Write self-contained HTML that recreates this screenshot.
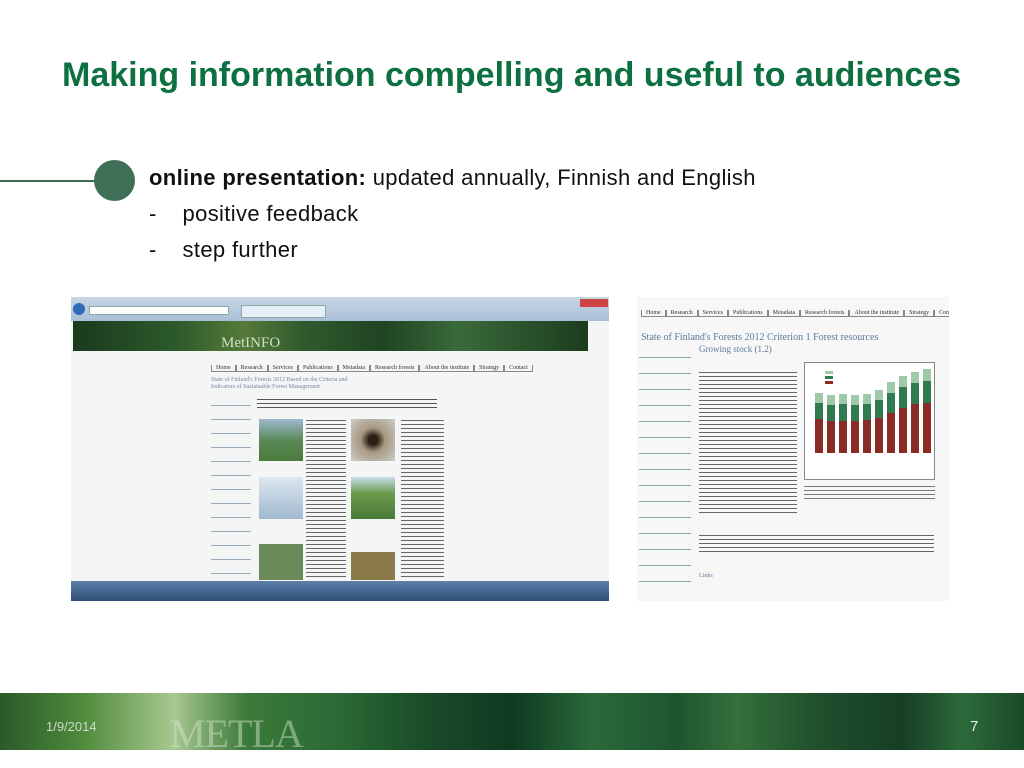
<!DOCTYPE html>
<html><head><meta charset="utf-8"><style>
*{margin:0;padding:0;box-sizing:border-box}
body{width:1024px;height:768px;background:#fff;position:relative;overflow:hidden;font-family:"Liberation Sans",sans-serif}
.abs{position:absolute}
h1{position:absolute;left:62px;top:56px;font-size:34px;font-weight:bold;color:#0d7040;white-space:nowrap;letter-spacing:0px}
.txt{position:absolute;left:149px;font-size:22px;color:#111;white-space:nowrap;letter-spacing:0.35px}
.nav span{display:inline-block;border:1px solid #888;border-top:none;padding:0 4px;font-size:6px;color:#333;font-family:"Liberation Serif",serif}
.serif{font-family:"Liberation Serif",serif}
</style></head><body>
<h1>Making information compelling and useful to audiences</h1>
<div class="abs" style="left:0;top:180px;width:100px;height:2px;background:#3c6e54"></div>
<div class="abs" style="left:94px;top:160px;width:41px;height:41px;border-radius:50%;background:#3f6f56"></div>
<div class="txt" style="top:165px"><b>online presentation:</b> updated annually, Finnish and English</div>
<div class="txt" style="top:201px">-&nbsp;&nbsp;&nbsp;&nbsp;positive feedback</div>
<div class="txt" style="top:237px">-&nbsp;&nbsp;&nbsp;&nbsp;step further</div>

<!-- screenshot 1 -->
<div class="abs" style="left:71px;top:297px;width:538px;height:304px;background:#f4f5f5;overflow:hidden">
 <div class="abs" style="left:0;top:0;width:538px;height:24px;background:linear-gradient(#c9d6e4,#a9bfd6)"></div>
 <div class="abs" style="left:2px;top:6px;width:12px;height:12px;border-radius:50%;background:#2e6db5"></div>
 <div class="abs" style="left:18px;top:9px;width:140px;height:9px;background:#fff;border:1px solid #8aa"></div>
 <div class="abs" style="left:170px;top:8px;width:85px;height:13px;background:#e8eef5;border:1px solid #8aa"></div>
 <div class="abs" style="left:509px;top:2px;width:28px;height:8px;background:#c44"></div>
 <div class="abs" style="left:2px;top:24px;width:515px;height:30px;background:linear-gradient(90deg,#1a3a1e,#2c5a2a 20%,#557a3a 33%,#2f5a2d 45%,#1f4422 60%,#3a6a3a 75%,#1b3c1e)"></div>
 <div class="abs serif" style="left:150px;top:38px;font-size:15px;color:#cfe0c0">MetINFO</div>
 <div class="abs nav" style="left:140px;top:59px;white-space:nowrap"><span>Home</span><span>Research</span><span>Services</span><span>Publications</span><span>Metadata</span><span>Research forests</span><span>About the institute</span><span>Strategy</span><span>Contact</span></div>
 <div class="abs serif" style="left:140px;top:80px;width:140px;font-size:6px;color:#7a8aa0;line-height:7px">State of Finland's Forests 2012 Based on the Criteria and Indicators of Sustainable Forest Management</div>
 <div class="abs" style="left:140px;top:100px;width:40px;height:180px;background:repeating-linear-gradient(#f4f5f5 0 8px,#9ab 8px 9px,#f4f5f5 9px 14px)"></div>
 <div class="abs" style="left:186px;top:100px;width:180px;height:12px;background:repeating-linear-gradient(#f4f5f5 0 2px,#555 2px 3px,#f4f5f5 3px 4px)"></div>
 <div class="abs" style="left:188px;top:122px;width:44px;height:42px;background:linear-gradient(#9fb8cf,#5a8a5a 50%,#4c7a3a)"></div>
 <div class="abs" style="left:280px;top:122px;width:44px;height:42px;background:radial-gradient(circle,#2a2218 15%,#a89880 40%,#ccc)"></div>
 <div class="abs" style="left:188px;top:180px;width:44px;height:42px;background:linear-gradient(#dde8f0,#a0b8d0)"></div>
 <div class="abs" style="left:280px;top:180px;width:44px;height:42px;background:linear-gradient(#c8dcea,#6a9a4a 40%,#4a7a3a)"></div>
 <div class="abs" style="left:188px;top:247px;width:44px;height:36px;background:#6a8a5a"></div>
 <div class="abs" style="left:280px;top:255px;width:44px;height:28px;background:#8a7a4a"></div>
 <div class="abs" style="left:235px;top:120px;width:40px;height:160px;background:repeating-linear-gradient(#f4f5f5 0 3px,#666 3px 4px)"></div>
 <div class="abs" style="left:330px;top:120px;width:43px;height:160px;background:repeating-linear-gradient(#f4f5f5 0 3px,#666 3px 4px)"></div>
 <div class="abs" style="left:0;top:284px;width:538px;height:20px;background:linear-gradient(#5d7fa8,#2e4e78)"></div>
</div>

<!-- screenshot 2 -->
<div class="abs serif" style="left:637px;top:297px;width:312px;height:304px;background:#f7f7f7;overflow:hidden;color:#333">
 <div class="abs nav" style="left:4px;top:4px;white-space:nowrap"><span>Home</span><span>Research</span><span>Services</span><span>Publications</span><span>Metadata</span><span>Research forests</span><span>About the institute</span><span>Strategy</span><span>Contact</span></div>
 <div class="abs" style="left:4px;top:35px;font-size:10px;color:#5a7a9a;white-space:nowrap">State of Finland's Forests 2012 Criterion 1 Forest resources</div>
 <div class="abs" style="left:62px;top:47px;font-size:9px;color:#5a7a9a">Growing stock (1.2)</div>
 <div class="abs" style="left:2px;top:50px;width:52px;height:250px;background:repeating-linear-gradient(#f7f7f7 0 10px,#8aa 10px 11px,#f7f7f7 11px 16px)"></div>
 <div class="abs" style="left:62px;top:72px;width:98px;height:145px;background:repeating-linear-gradient(#f7f7f7 0 3px,#666 3px 4px)"></div>
 <div class="abs" style="left:62px;top:235px;width:235px;height:22px;background:repeating-linear-gradient(#f7f7f7 0 3px,#666 3px 4px)"></div>
 <div class="abs" style="left:62px;top:276px;font-size:6px;color:#5a7a9a">Links</div>
 <div class="abs" style="left:167px;top:65px;width:131px;height:118px;border:1px solid #888;background:#fff">
  <svg width="129" height="116" viewBox="0 0 129 116">
   <g>
    <rect x="10" y="56" width="8" height="34" fill="#8b2b26"/><rect x="10" y="40" width="8" height="16" fill="#2f7a4e"/><rect x="10" y="30" width="8" height="10" fill="#9fc9a8"/>
    <rect x="22" y="58" width="8" height="32" fill="#8b2b26"/><rect x="22" y="42" width="8" height="16" fill="#2f7a4e"/><rect x="22" y="32" width="8" height="10" fill="#9fc9a8"/>
    <rect x="34" y="58" width="8" height="32" fill="#8b2b26"/><rect x="34" y="41" width="8" height="17" fill="#2f7a4e"/><rect x="34" y="31" width="8" height="10" fill="#9fc9a8"/>
    <rect x="46" y="58" width="8" height="32" fill="#8b2b26"/><rect x="46" y="42" width="8" height="16" fill="#2f7a4e"/><rect x="46" y="32" width="8" height="10" fill="#9fc9a8"/>
    <rect x="58" y="57" width="8" height="33" fill="#8b2b26"/><rect x="58" y="41" width="8" height="16" fill="#2f7a4e"/><rect x="58" y="31" width="8" height="10" fill="#9fc9a8"/>
    <rect x="70" y="55" width="8" height="35" fill="#8b2b26"/><rect x="70" y="37" width="8" height="18" fill="#2f7a4e"/><rect x="70" y="27" width="8" height="10" fill="#9fc9a8"/>
    <rect x="82" y="50" width="8" height="40" fill="#8b2b26"/><rect x="82" y="30" width="8" height="20" fill="#2f7a4e"/><rect x="82" y="19" width="8" height="11" fill="#9fc9a8"/>
    <rect x="94" y="45" width="8" height="45" fill="#8b2b26"/><rect x="94" y="24" width="8" height="21" fill="#2f7a4e"/><rect x="94" y="13" width="8" height="11" fill="#9fc9a8"/>
    <rect x="106" y="41" width="8" height="49" fill="#8b2b26"/><rect x="106" y="20" width="8" height="21" fill="#2f7a4e"/><rect x="106" y="9" width="8" height="11" fill="#9fc9a8"/>
    <rect x="118" y="40" width="8" height="50" fill="#8b2b26"/><rect x="118" y="18" width="8" height="22" fill="#2f7a4e"/><rect x="118" y="6" width="8" height="12" fill="#9fc9a8"/>
    <rect x="20" y="8" width="8" height="3" fill="#9fc9a8"/><rect x="20" y="13" width="8" height="3" fill="#2f7a4e"/><rect x="20" y="18" width="8" height="3" fill="#8b2b26"/>
   </g>
  </svg>
 </div>
 <div class="abs" style="left:167px;top:186px;width:131px;height:18px;background:repeating-linear-gradient(#f7f7f7 0 3px,#777 3px 4px)"></div>
</div>

<!-- footer -->
<div class="abs" style="left:0;top:693px;width:1024px;height:57px;background:linear-gradient(90deg,#2a5a2a 0%,#4e8a3a 8%,#a8c890 17%,#3c7a3a 24%,#2a6a35 33%,#1a4a28 42%,#0f3a22 50%,#2a6a3a 58%,#1e5530 66%,#356f3a 72%,#1f4f2c 80%,#163e25 88%,#2c6a3a 94%,#1a4a28 100%)"></div>
<div class="abs" style="left:0;top:750px;width:1024px;height:18px;background:#fff"></div>
<div class="abs" style="left:46px;top:719px;font-size:13px;color:#cfd9cf">1/9/2014</div>
<div class="abs serif" style="left:170px;top:710px;font-size:40px;color:rgba(220,235,215,0.45);letter-spacing:-1px">METLA</div>
<div class="abs" style="left:970px;top:718px;font-size:15px;color:#e8efe8">7</div>
</body></html>
